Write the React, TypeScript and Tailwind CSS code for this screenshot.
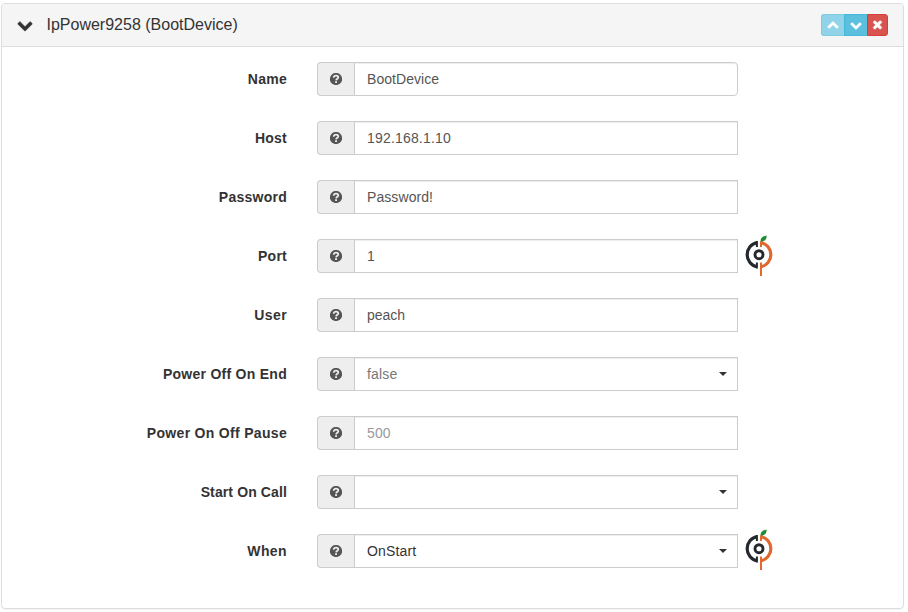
import React from 'react';

type Field = {
  label: string;
  value: string;
  tone?: string;
  select?: boolean;
  mark?: string;
  spacing?: string;
  valueSpacing?: string;
};

const fields: Field[] = [
  { label: 'Name', value: 'BootDevice', spacing: 'tracking-[0.25px]', valueSpacing: 'tracking-[0.05px]' },
  { label: 'Host', value: '192.168.1.10', spacing: 'tracking-[0.25px]', valueSpacing: 'tracking-[0.18px]' },
  { label: 'Password', value: 'Password!', spacing: 'tracking-[0.25px]', valueSpacing: 'tracking-[0.08px]' },
  { label: 'Port', value: '1', spacing: 'tracking-[0.25px]', mark: 'mt-0' },
  { label: 'User', value: 'peach', spacing: 'tracking-[0.4px]' },
  { label: 'Power Off On End', value: 'false', tone: 'text-[#777]', select: true, spacing: 'tracking-[0.27px]', valueSpacing: 'tracking-[0.15px]' },
  { label: 'Power On Off Pause', value: '500', tone: 'text-[#999]', spacing: 'tracking-[0.31px]', valueSpacing: 'tracking-[0.1px]' },
  { label: 'Start On Call', value: '', select: true, spacing: 'tracking-[0.12px]' },
  { label: 'When', value: 'OnStart', tone: 'text-[#333]', select: true, spacing: 'tracking-[0.4px]', valueSpacing: 'tracking-[0.15px]', mark: '-mt-[2px]' },
];

function Chevron({ className }: { className: string }) {
  return (
    <svg viewBox="0 0 1792 1792" fill="currentColor" stroke="currentColor" strokeWidth="70" strokeLinejoin="round" className={className}>
      <path d="M1683 808l-742 741q-19 19-45 19t-45-19L109 808q-19-19-19-45.5t19-45.5l166-165q19-19 45-19t45 19l531 531 531-531q19-19 45-19t45 19l166 165q19 19 19 45.5t-19 45.5z" />
    </svg>
  );
}

function Times({ className }: { className: string }) {
  return (
    <svg viewBox="0 0 1792 1792" fill="currentColor" stroke="currentColor" strokeWidth="50" className={className}>
      <path d="M1490 1322q0 40-28 68l-136 136q-28 28-68 28t-68-28l-294-294-294 294q-28 28-68 28t-68-28l-136-136q-28-28-28-68t28-68l294-294-294-294q-28-28-28-68t28-68l136-136q28-28 68-28t68 28l294 294 294-294q28-28 68-28t68 28l136 136q28 28 28 68t-28 68l-294 294 294 294q28 28 28 68z" />
    </svg>
  );
}

function Question() {
  return (
    <svg viewBox="0 0 12 12" className="size-3 text-[#555]">
      <circle cx="6" cy="6" r="6.1" fill="currentColor" />
      <path d="M3.700 4.700C3.700 3.200 4.700 2.600 6 2.600S8.300 3.300 8.300 4.400C8.300 5.800 6.300 5.700 6.100 7.400" fill="none" stroke="#eee" strokeWidth="1.750" />
      <path d="M5.100 8.200h1.900v1.800H5.100z" fill="#eee" />
    </svg>
  );
}

function PeachMark({ className }: { className: string }) {
  return (
    <svg viewBox="0 0 30 42" fill="none" className={`ml-[6px] h-[42px] w-[30px] shrink-0 ${className}`}>
      <path d="M13 7.600A12 12.300 0 0 0 13 31.800" stroke="#25282c" strokeWidth="3.200" />
      <path d="M17 7.600A12 12.300 0 0 1 17 31.800" stroke="#e0692f" strokeWidth="3.200" />
      <path d="M12.900 5.900v6.100M12.900 27.500v6" stroke="#25282c" strokeWidth="2" />
      <path d="M17 6.300v5.700M17 27.500v13.500" stroke="#e0692f" strokeWidth="2" />
      <circle cx="15" cy="19.700" r="4" stroke="#25282c" strokeWidth="2.900" />
      <path d="M16.600 6.500C16.300 3 18.300 1.400 22.600.400C22.700 4.200 21.500 6.500 16.600 6.500Z" fill="#228b38" />
    </svg>
  );
}

function FieldRow({ field, first }: { field: Field; first: boolean }) {
  return (
    <div className="flex h-[34px] items-center">
      <div className={`w-[285px] shrink-0 text-right text-[14px] leading-5 font-bold whitespace-nowrap text-[#333] ${field.spacing ?? ''}`}>
        {field.label}
      </div>
      <div className="ml-[30px] flex h-[34px] w-[421px] shrink-0">
        <div className="flex w-[37px] shrink-0 items-center justify-center rounded-l border border-r-0 border-[#ccc] bg-[#eee]">
          <Question />
        </div>
        <div
          className={`flex flex-1 items-center justify-between border border-[#ccc] pr-[10px] pl-3 text-[14px] leading-5 shadow-[inset_0_1px_1px_rgba(0,0,0,0.075)] ${first ? 'rounded-r' : ''} ${field.tone ?? 'text-[#555]'}`}
        >
          <span className={field.valueSpacing ?? ''}>{field.value}</span>
          {field.select && (
            <span className="h-0 w-0 border-x-4 border-t-4 border-x-transparent border-t-[#333]" />
          )}
        </div>
      </div>
      {field.mark && <PeachMark className={field.mark} />}
    </div>
  );
}

export default function App() {
  return (
    <div className="h-[612px] w-[908px] bg-white pt-[3px] pl-px font-['Liberation_Sans',Arial,sans-serif]">
      <section className="h-[606px] w-[903px] overflow-hidden rounded border border-[#ddd] shadow-[0_1px_1px_rgba(0,0,0,0.05)]">
        <header className="flex h-[43px] items-center border-b border-[#ddd] bg-[#f5f5f5] pr-[15px] pl-[15px] text-[#333]">
          <Chevron className="size-4" />
          <h3 className="ml-[13.500px] text-[16px] leading-[18px]">IpPower9258 (BootDevice)</h3>
          <div className="ml-auto flex h-[22px] text-white">
            <button className="flex w-[23px] items-center justify-center rounded-l-[3px] border border-r-0 border-[#7fcbe0] bg-[#91d3e8]">
              <Chevron className="mt-px size-3 rotate-180" />
            </button>
            <button className="flex w-[23px] items-center justify-center border border-r-0 border-[#46b8da] bg-[#5bc0de]">
              <Chevron className="size-3" />
            </button>
            <button className="flex w-[21px] items-center justify-center rounded-r-[3px] border border-[#d43f3a] bg-[#d9534f]">
              <Times className="-mt-px size-[13px]" />
            </button>
          </div>
        </header>
        <div className="flex flex-col gap-[25px] pt-[15px]">
          {fields.map((field, i) => (
            <FieldRow key={field.label} field={field} first={i === 0} />
          ))}
        </div>
      </section>
    </div>
  );
}
